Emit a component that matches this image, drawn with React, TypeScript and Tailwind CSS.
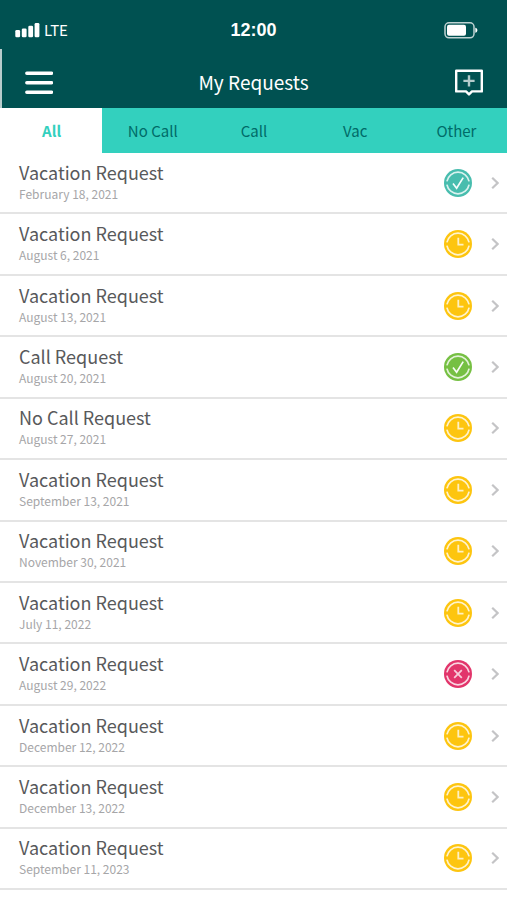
import { useState } from 'react';

type Status = 'accepted' | 'approved' | 'pending' | 'denied';

interface TimeOffRequest {
  title: string;
  date: string;
  status: Status;
}

const TABS = ['All', 'No Call', 'Call', 'Vac', 'Other'];

const REQUESTS: TimeOffRequest[] = [
  { title: 'Vacation Request', date: 'February 18, 2021', status: 'accepted' },
  { title: 'Vacation Request', date: 'August 6, 2021', status: 'pending' },
  { title: 'Vacation Request', date: 'August 13, 2021', status: 'pending' },
  { title: 'Call Request', date: 'August 20, 2021', status: 'approved' },
  { title: 'No Call Request', date: 'August 27, 2021', status: 'pending' },
  { title: 'Vacation Request', date: 'September 13, 2021', status: 'pending' },
  { title: 'Vacation Request', date: 'November 30, 2021', status: 'pending' },
  { title: 'Vacation Request', date: 'July 11, 2022', status: 'pending' },
  { title: 'Vacation Request', date: 'August 29, 2022', status: 'denied' },
  { title: 'Vacation Request', date: 'December 12, 2022', status: 'pending' },
  { title: 'Vacation Request', date: 'December 13, 2022', status: 'pending' },
  { title: 'Vacation Request', date: 'September 11, 2023', status: 'pending' },
];

const STATUS_COLORS: Record<Status, string> = {
  accepted: 'text-[#48bdae]',
  approved: 'text-[#76c043]',
  pending: 'text-[#fdc50f]',
  denied: 'text-[#e2356b]',
};

// ────────────────────────────────────────────────────────────────────────────
// Icons
// ────────────────────────────────────────────────────────────────────────────

function StatusIcon({ status }: { status: Status }) {
  return (
    <svg
      viewBox="0 0 28 28"
      role="img"
      aria-label={status}
      className={`size-7 shrink-0 ${STATUS_COLORS[status]}`}
      fill="none"
    >
      <circle cx="14" cy="14" r="14" fill="currentColor" />
      {/* Broken inner ring */}
      <path
        d="M2.9 12.4a11.3 11.3 0 0 1 22.2 0M2.9 15.6a11.3 11.3 0 0 0 22.2 0"
        stroke="#fff"
        strokeOpacity="0.8"
        strokeWidth="1.7"
      />
      {(status === 'accepted' || status === 'approved') && (
        <path d="m9 14.6 3.6 4.6 6.6-10.6" stroke="#fff" strokeOpacity="0.95" strokeWidth="1.7" />
      )}
      {status === 'pending' && <path d="M14.3 7.8v6.8h5.2" stroke="#fff" strokeOpacity="0.75" strokeWidth="1.8" />}
      {status === 'denied' && (
        <path d="m10.2 10.2 7.6 7.6m0-7.6-7.6 7.6" stroke="#fff" strokeOpacity="0.75" strokeWidth="1.8" />
      )}
    </svg>
  );
}

function ChevronIcon() {
  return (
    <svg viewBox="0 0 8 12" className="h-3 w-2 shrink-0" fill="none" aria-hidden="true">
      <path d="m1.2 0.8 5.4 5.2-5.4 5.2" stroke="#c4c4c6" strokeWidth="2.2" />
    </svg>
  );
}

function SignalIcon() {
  return (
    <svg viewBox="0 0 25 15" className="h-[15px] w-[25px]" fill="#fff" aria-hidden="true">
      <rect x="0.3" y="7" width="4.8" height="7.3" rx="1.3" />
      <rect x="6.8" y="5.5" width="4.8" height="8.8" rx="1.3" />
      <rect x="13.3" y="2.8" width="4.8" height="11.5" rx="1.3" />
      <rect x="19.6" y="0" width="4.8" height="14.3" rx="1.3" />
    </svg>
  );
}

function BatteryIcon() {
  return (
    <svg viewBox="0 0 34 17" className="h-[17px] w-[34px]" fill="none" aria-hidden="true">
      <rect x="1" y="0.8" width="29" height="15" rx="4" stroke="#fff" strokeOpacity="0.75" strokeWidth="1.5" />
      <rect x="3" y="2.8" width="19" height="11" rx="2" fill="#fff" />
      <path d="M31.3 5.8c2.8.5 2.8 4.5 0 5z" fill="#fff" />
    </svg>
  );
}

function MenuIcon() {
  return (
    <svg viewBox="0 0 28 24" className="h-6 w-7" aria-hidden="true">
      <path d="M1.8 2.2h24.8M1.8 11.7h24.8M1.8 21.2h24.8" stroke="#fff" strokeWidth="3.4" strokeLinecap="round" />
    </svg>
  );
}

function AddRequestIcon() {
  return (
    <svg viewBox="0 0 30 28" className="h-7 w-[30px]" fill="none" aria-hidden="true">
      <path
        d="M2.2 1.8h25.6v20.6H18L15 25.4l-3-3H2.2z"
        stroke="#fff"
        strokeWidth="2.4"
        strokeLinejoin="round"
      />
      <path d="M15 6.2v11.4M9.4 11.9h11.2" stroke="#fff" strokeOpacity="0.7" strokeWidth="2.4" />
    </svg>
  );
}

// ────────────────────────────────────────────────────────────────────────────
// Page
// ────────────────────────────────────────────────────────────────────────────

function RequestRow({ request }: { request: TimeOffRequest }) {
  return (
    <li className="flex flex-1 border-b-2 border-[#e4e4e4]">
      <a href="#" className="flex flex-1 items-center pr-2 pl-[19px]">
        <div className="flex-1 pb-0.5">
          <p className="text-lg leading-6 text-[#58595b]">{request.title}</p>
          <p className="text-xs leading-5 text-[#a6a6a8]">{request.date}</p>
        </div>
        <StatusIcon status={request.status} />
        <span className="ml-[19px]">
          <ChevronIcon />
        </span>
      </a>
    </li>
  );
}

export default function App() {
  const [activeTab, setActiveTab] = useState('All');

  return (
    <div className="flex min-h-screen flex-col bg-white font-['Noto_Sans_CJK_SC',sans-serif]">
      <header className="bg-[#005151] text-white">
        {/* Status bar */}
        <div className="grid h-[49px] grid-cols-3 items-center px-[15px] pt-[11px]">
          <div className="flex items-center gap-1">
            <SignalIcon />
            <span className="text-[15px] leading-5">LTE</span>
          </div>
          <span className="text-center font-['Liberation_Sans',sans-serif] text-lg leading-5 font-bold">12:00</span>
          <div className="flex justify-end pr-[14px]">
            <BatteryIcon />
          </div>
        </div>

        {/* Title bar */}
        <div className="flex h-[59px] items-center border-l-2 border-[#b8cccc] px-[23px] pt-2">
          <button type="button" aria-label="Menu">
            <MenuIcon />
          </button>
          <h1 className="flex-1 pb-0.5 text-center text-[19px] leading-6">My Requests</h1>
          <button type="button" aria-label="New request">
            <AddRequestIcon />
          </button>
        </div>
      </header>

      <nav className="grid h-[45px] grid-cols-5 border-l border-white bg-[#33d0be]">
        {TABS.map((tab) => (
          <button
            key={tab}
            type="button"
            onClick={() => setActiveTab(tab)}
            className={`text-[15px] leading-5 ${
              tab === activeTab ? 'bg-white font-bold text-[#33d0be]' : 'text-[#006b68]'
            }`}
          >
            {tab}
          </button>
        ))}
      </nav>

      <ul className="flex flex-1 flex-col pb-[10px]">
        {REQUESTS.map((request) => (
          <RequestRow key={request.date} request={request} />
        ))}
      </ul>
    </div>
  );
}
